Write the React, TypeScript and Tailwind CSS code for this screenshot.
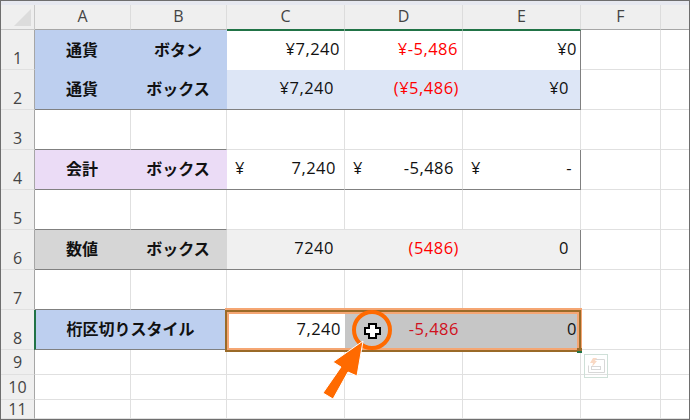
import React from "react";

const jp = "font-['Noto_Sans_CJK_JP',sans-serif]";
const num = "font-['Open_Sans','Noto_Sans_CJK_JP',sans-serif]";

const cols = ["A", "B", "C", "D", "E", "F"];
const line = "border-r border-b border-[#e0e0e0]";

function Head({ children, active }: { children: React.ReactNode; active?: boolean }) {
    return (
        <div className={`flex items-center justify-center border-r border-b border-r-[#dcdcdc] bg-[#efefef] pb-[2px] text-[16px] text-[#444] ${active ? "border-b-[#217346]" : "border-b-[#a6a6a6]"} ${num}`}>
            {children}
        </div>
    );
}

function RowNo({ n, short }: { n: number; short?: boolean }) {
    return (
        <div className={`flex justify-center border-r border-b border-r-[#a6a6a6] border-b-[#e0e0e0] bg-[#efefef] text-[16px] text-[#444] ${short ? "items-center pb-[1px] leading-[16px]" : "items-end leading-[22px]"} ${num}`}>
            {n}
        </div>
    );
}

function Label({ children, className = "", span }: { children: React.ReactNode; className?: string; span?: boolean }) {
    return (
        <div className={`flex items-center justify-center pb-[3px] pr-[2px] text-[16px] font-bold text-[#111] ${jp} ${span ? "col-span-2" : ""} ${className}`}>
            {children}
        </div>
    );
}

function Val({ children, className = "", pr = "pr-[4px]" }: { children?: React.ReactNode; className?: string; pr?: string }) {
    return (
        <div className={`flex items-center justify-end pb-[2px] text-[16.5px] tracking-[0.5px] text-[#111] ${num} ${pr} ${className}`}>
            {children}
        </div>
    );
}

function Acct({ value, className = "" }: { value: string; className?: string }) {
    return (
        <div className={`flex items-center justify-between pb-[2px] pl-[8px] pr-[8px] text-[16.5px] tracking-[0.5px] text-[#111] ${num} ${className}`}>
            <span>¥</span>
            <span>{value}</span>
        </div>
    );
}

function Empty({ last }: { last?: boolean }) {
    return <div className={last ? "border-b border-[#e0e0e0]" : line} />;
}

function Gap({ n }: { n: number }) {
    return (
        <>
            <RowNo n={n} />
            <div className="border-r border-b border-r-[#e0e0e0] border-b-[#808080]" />
            <div className="border-r border-b border-r-[#e0e0e0] border-b-[#808080]" />
            <Empty />
            <Empty />
            <Empty />
            <Empty />
            <Empty last />
        </>
    );
}

export default function App() {
    const blue = "bg-[#bdcfef]";
    const pale = "bg-[#dde6f6]";
    const dark = "border-b border-[#808080]";
    return (
        <div className="relative h-[420px] w-[690px] overflow-hidden bg-white">
            <div className="h-full w-full border border-[#6e6e6e]">
                <div className="h-[4px] bg-[#e6e8f0]" />
                <div className="grid h-[calc(100%-4px)] grid-cols-[34px_96px_96px_118px_118px_118px_80px_1fr] grid-rows-[25px_40px_40px_40px_40px_40px_40px_40px_40px_25px_25px_1fr]">
                    {/* Header */}
                    <div className="relative border-r border-b border-[#c8c8c8] bg-[#efefef]">
                        <div className="absolute bottom-[3px] right-[3px] h-0 w-0 border-b-[17px] border-l-[17px] border-b-[#dcdcdc] border-l-transparent" />
                    </div>
                    {cols.map((c) => (
                        <Head key={c} active={c === "C" || c === "D" || c === "E"}>{c}</Head>
                    ))}
                    <div className="border-b border-[#a6a6a6] bg-[#efefef]" />

                    {/* 1 */}
                    <RowNo n={1} />
                    <Label className={blue}>通貨</Label>
                    <Label className={blue}>ボタン</Label>
                    <Val className="border-t border-t-[#217346] border-r border-r-[#e0e0e0]">¥7,240</Val>
                    <Val className="border-t border-t-[#217346] border-r border-r-[#e0e0e0] !text-[#ff0000]">¥-5,486</Val>
                    <Val pr="pr-[3px]" className="border-t border-t-[#217346] border-r border-r-[#808080]">¥0</Val>
                    <Empty />
                    <Empty last />

                    {/* 2 */}
                    <RowNo n={2} />
                    <Label className={`${blue} ${dark}`}>通貨</Label>
                    <Label className={`${blue} ${dark}`}>ボックス</Label>
                    <Val pr="pr-[11px]" className={`${pale} ${dark}`}>¥7,240</Val>
                    <Val className={`${pale} ${dark} !text-[#ff0000]`}>(¥5,486)</Val>
                    <Val pr="pr-[11px]" className={`${pale} ${dark} border-r border-r-[#808080]`}>¥0</Val>
                    <Empty />
                    <Empty last />

                    {/* 3 */}
                    <Gap n={3} />

                    {/* 4 */}
                    <RowNo n={4} />
                    <Label className={`bg-[#ebdcf6] ${dark}`}>会計</Label>
                    <Label className={`bg-[#ebdcf6] ${dark}`}>ボックス</Label>
                    <Acct value="7,240" className={`${dark} border-r border-r-[#e0e0e0]`} />
                    <Acct value="-5,486" className={`${dark} border-r border-r-[#e0e0e0]`} />
                    <Acct value="-" className={`${dark} border-r border-r-[#808080]`} />
                    <Empty />
                    <Empty last />

                    {/* 5 */}
                    <Gap n={5} />

                    {/* 6 */}
                    <RowNo n={6} />
                    <Label className={`bg-[#d6d6d6] ${dark}`}>数値</Label>
                    <Label className={`bg-[#d6d6d6] ${dark}`}>ボックス</Label>
                    <Val pr="pr-[11px]" className={`bg-[#f0f0f0] ${dark}`}>7240</Val>
                    <Val className={`bg-[#f0f0f0] ${dark} !text-[#ff0000]`}>(5486)</Val>
                    <Val pr="pr-[11px]" className={`bg-[#f0f0f0] ${dark} border-r border-r-[#808080]`}>0</Val>
                    <Empty />
                    <Empty last />

                    {/* 7 */}
                    <Gap n={7} />

                    {/* 8 */}
                    <RowNo n={8} />
                    <Label span className={`${blue} ${dark} border-l-2 border-l-[#217346] -ml-[1px]`}>桁区切りスタイル</Label>
                    <Val>7,240</Val>
                    <Val className="bg-[#c6c6c6] !text-[#d01020]">-5,486</Val>
                    <Val className="bg-[#c6c6c6]">0</Val>
                    <Empty />
                    <Empty last />

                    {[9, 10, 11].map((n) => (
                        <React.Fragment key={n}>
                            <RowNo n={n} short />
                            <Empty />
                            <Empty />
                            <Empty />
                            <Empty />
                            <Empty />
                            <Empty />
                            <Empty last />
                        </React.Fragment>
                    ))}
                </div>
            </div>

            {/* Selection outline */}
            <div className="absolute left-[225px] top-[308px] h-[44px] w-[357px] border-t-2 border-r border-[#f5a673]">
                <div className="h-full w-full border-2 border-[#9a6a28]">
                    <div className="h-full w-full border-2 border-[#f5a673]" />
                </div>
            </div>
            <div className="absolute left-[577px] top-[348px] h-[5px] w-[5px] bg-[#9a6a28]">
                <div className="mt-[3px] h-[2px] w-full bg-[#217346]" />
            </div>

            {/* Quick analysis button */}
            <svg className="absolute left-[584px] top-[354px]" width="25" height="25" viewBox="0 0 25 25" fill="none">
                <rect x="0.5" y="0.5" width="23" height="23" stroke="#cfe0d8" />
                <path d="M9 4h4l-2 3h2l-5 6 1-4H6z" fill="#f9d9c4" />
                <path d="M11.5 5.5h9v13h-16v-7" stroke="#d8d8d8" />
                <rect x="7.5" y="12.5" width="9" height="3" stroke="#d8d8d8" />
            </svg>

            {/* Cursor highlight and arrow */}
            <svg className="absolute left-[320px] top-[305px]" width="100" height="100" viewBox="0 0 100 100" fill="none">
                <circle cx="52" cy="25" r="18" stroke="#ff6a00" strokeWidth="4" />
                <path
                    d="M48.5 18.5h7v4h4v6h-4v4h-7v-4h-4v-6h4z"
                    fill="#fff"
                    stroke="#000"
                    strokeWidth="2"
                    shapeRendering="crispEdges"
                />
                <path d="M43 36 L37 71 L28 67 L13 94 L3 88 L21 62 L13 57 Z" fill="#ff6a00" stroke="#fff" strokeWidth="1" />
            </svg>
        </div>
    );
}
